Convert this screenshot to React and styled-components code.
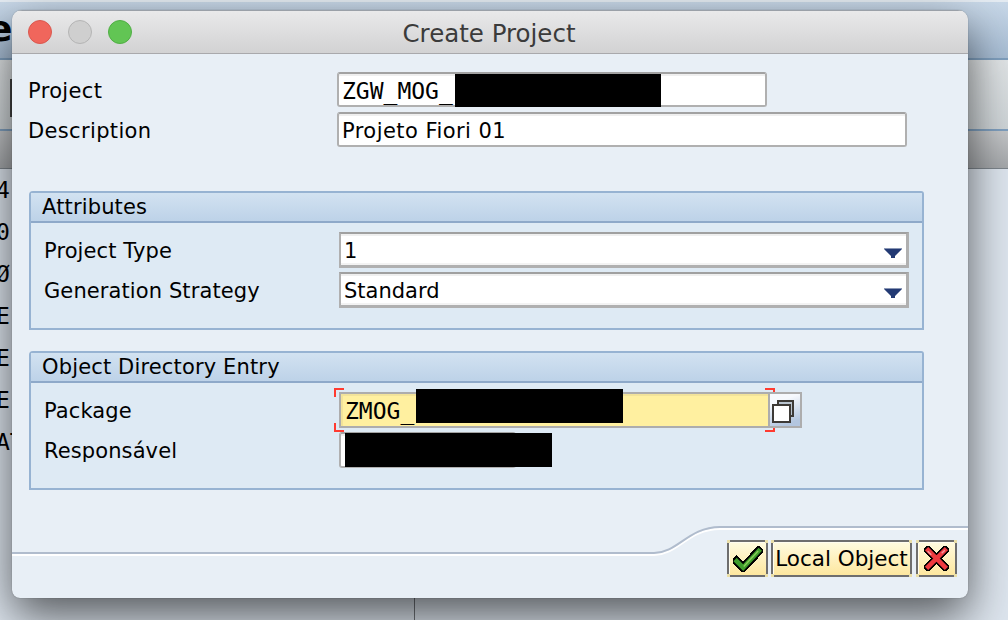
import styled, { createGlobalStyle } from "styled-components";

const GlobalStyle = createGlobalStyle`
  html, body {
    margin: 0;
    padding: 0;
    width: 1008px;
    height: 620px;
    overflow: hidden;
    background: #dfe6ee;
  }
  * {
    box-sizing: border-box;
  }
`;

const backRows = ["4", "0", "Ø", "E", "E", "E", "AT"];

function CheckIcon() {
  return (
    <svg width="30" height="26" viewBox="0 0 28 24">
      <path d="M3.5 14 L9.5 20 L24 4.5" fill="none" stroke="#000" strokeWidth="8" strokeLinecap="square" shapeRendering="crispEdges" />
      <path d="M3.5 14 L9.5 20 L24 4.5" fill="none" stroke="#3f9c2c" strokeWidth="4.4" strokeLinecap="square" />
      <path d="M10 19 L23.5 4.5" fill="none" stroke="#8ccf5a" strokeWidth="1.2" />
    </svg>
  );
}

function CancelIcon() {
  return (
    <svg width="25" height="25" viewBox="0 0 24 24">
      <path d="M4 4 L20 20 M20 4 L4 20" fill="none" stroke="#000" strokeWidth="7.6" strokeLinecap="square" shapeRendering="crispEdges" />
      <path d="M4 4 L20 20 M20 4 L4 20" fill="none" stroke="#ee3a40" strokeWidth="4.4" strokeLinecap="square" />
      <path d="M3.5 5 L7 8.5 M20 4 L17 7" fill="none" stroke="#f59aa0" strokeWidth="1.4" />
    </svg>
  );
}

function CopyIcon() {
  return (
    <svg width="24" height="24" viewBox="0 0 24 24">
      <rect x="7" y="1" width="15" height="15" fill="#b9c4cf" stroke="#3d3a36" strokeWidth="2" />
      <rect x="2" y="5" width="17" height="17" fill="#fff" stroke="#3d3a36" strokeWidth="2" />
    </svg>
  );
}

function DropArrow() {
  return (
    <svg width="18" height="11" viewBox="0 0 18 11">
      <rect x="0" y="0" width="18" height="1" fill="#8a97b5" />
      <polygon points="0,1 18,1 11,8 11,10 7,10 7,8" fill="#233a74" />
    </svg>
  );
}

function FooterCurve() {
  return (
    <Curve viewBox="0 0 956 32" width="956" height="32">
      <path d="M0 30 H642 C666 30 676 4 708 4 H956" fill="none" stroke="#fff" strokeWidth="2" />
      <path d="M0 28 H642 C666 28 676 2 708 2 H956" fill="none" stroke="#b0bccd" strokeWidth="2" />
    </Curve>
  );
}

export default function App() {
  return (
    <>
      <GlobalStyle />
      <Page>
        <BackHeader>
          <BackTitle>e</BackTitle>
        </BackHeader>
        <BackToolbar>
          <BackMark />
        </BackToolbar>
        <BackColumns />
        <BackList>
          {backRows.map((text, i) => (
            <BackRow key={i}>{text}</BackRow>
          ))}
        </BackList>
        <BackDivider />

        <Dialog>
          <TitleBar>
            <Lights>
              <Light $color="#f0665c" $edge="#d9584f" />
              <Light $color="#cfcfcf" $edge="#b4b4b4" />
              <Light $color="#62c554" $edge="#50ae45" />
            </Lights>
            <Title>Create Project</Title>
          </TitleBar>

          <Content>
            <TopFields>
              <TopLabel>Project</TopLabel>
              <Input $width={430} $mono>
                ZGW_MOG_
                <Redaction $left={116} $top={0} $width={206} $height={33} />
              </Input>
              <TopLabel>Description</TopLabel>
              <Input $width={570}>Projeto Fiori 01</Input>
            </TopFields>

            <Group $top={44}>
              <GroupHeader>Attributes</GroupHeader>
              <GroupFields>
                <Label>Project Type</Label>
                <Select>
                  1
                  <DropArrow />
                </Select>
                <Label>Generation Strategy</Label>
                <Select>
                  Standard
                  <DropArrow />
                </Select>
              </GroupFields>
            </Group>

            <Group $top={21}>
              <GroupHeader>Object Directory Entry</GroupHeader>
              <GroupFields>
                <Label>Package</Label>
                <PackageRow>
                  <RequiredInput>
                    ZMOG_
                    <Redaction $left={75} $top={-5} $width={207} $height={34} />
                    <Marker $side="left" $edge="top" />
                    <Marker $side="left" $edge="bottom" />
                    <Marker $side="right" $edge="top" />
                    <Marker $side="right" $edge="bottom" />
                  </RequiredInput>
                  <HelpButton>
                    <CopyIcon />
                  </HelpButton>
                </PackageRow>
                <Label>Responsável</Label>
                <Input $width={177} $tall>
                  <Redaction $left={4} $top={-1} $width={207} $height={34} />
                </Input>
              </GroupFields>
            </Group>
          </Content>

          <Footer>
            <FooterCurve />
            <ActionButton $width={41}>
              <CheckIcon />
            </ActionButton>
            <ActionButton $width={141} $gap={3}>
              Local Object
            </ActionButton>
            <ActionButton $width={41} $gap={4}>
              <CancelIcon />
            </ActionButton>
          </Footer>
        </Dialog>
      </Page>
    </>
  );
}

const Page = styled.div`
  position: relative;
  width: 1008px;
  height: 620px;
  overflow: hidden;
  display: flex;
  flex-direction: column;
  font-family: "DejaVu Sans", sans-serif;
  color: #000;
`;

const BackHeader = styled.div`
  height: 60px;
  padding-top: 2px;
  border-top: 2px solid #e4ebf2;
  border-bottom: 2px solid #7f9fbe;
  background: linear-gradient(#c8d8e8, #a6bcd3);
  overflow: hidden;
`;

const BackTitle = styled.div`
  margin-left: -12px;
  font-size: 36px;
  font-weight: bold;
  line-height: 50px;
`;

const BackToolbar = styled.div`
  height: 69px;
  display: flex;
  align-items: center;
  background: linear-gradient(#e0e4e6, #cdd3d6);
`;

const BackMark = styled.div`
  width: 12px;
  height: 38px;
  margin-top: 6px;
  border-right: 2px solid #444;
`;

const BackColumns = styled.div`
  height: 41px;
  border-top: 2px solid #7f9fbe;
  border-bottom: 2px solid #7d858c;
  background: linear-gradient(#c4c6c8, #a4a7aa);
`;

const BackList = styled.div`
  flex: 1;
  margin-top: -1px;
  background: #dde5ee;
`;

const BackRow = styled.div`
  height: 42px;
  margin-left: -4px;
  font-family: "DejaVu Sans Mono", monospace;
  font-size: 23px;
  line-height: 42px;
`;

const BackDivider = styled.div`
  position: absolute;
  left: 414px;
  top: 590px;
  width: 1px;
  height: 30px;
  background: #70747a;
`;

const Dialog = styled.div`
  position: absolute;
  left: 12px;
  top: 10px;
  width: 956px;
  height: 588px;
  display: flex;
  flex-direction: column;
  border-radius: 10px 10px 8px 8px;
  background: #e8eff6;
  box-shadow: 0 18px 46px rgba(0, 0, 0, 0.62), 0 0 1px rgba(0, 0, 0, 0.5);
  overflow: hidden;
`;

const TitleBar = styled.div`
  position: relative;
  height: 44px;
  flex: none;
  display: flex;
  align-items: center;
  justify-content: center;
  padding-top: 2px;
  background: linear-gradient(#e9e9ea, #d2d2d3);
  border-top: 1px solid #9aa0a8;
  border-bottom: 1px solid #a9a9ac;
`;

const Lights = styled.div`
  position: absolute;
  left: 16px;
  top: 9px;
  display: flex;
  gap: 16px;
`;

const Light = styled.span`
  width: 24px;
  height: 24px;
  border-radius: 50%;
  background: ${(p) => p.$color};
  border: 1px solid ${(p) => p.$edge};
`;

const Title = styled.div`
  font-size: 24.5px;
  color: #3b3b3b;
  margin-left: -2px;
`;

const Content = styled.div`
  flex: 1;
  padding: 18px 0 0 17px;
`;

const TopFields = styled.div`
  display: grid;
  grid-template-columns: 308px 1fr;
  grid-auto-rows: 35px;
  row-gap: 5px;
  align-items: center;
`;

const Label = styled.div`
  margin-left: -1px;
  padding-top: 2px;
  font-size: 21px;
  letter-spacing: 0.1px;
  line-height: 36px;
  white-space: nowrap;
`;

const TopLabel = styled(Label)`
  letter-spacing: 0.35px;
`;

const Input = styled.div`
  position: relative;
  width: ${(p) => p.$width}px;
  height: ${(p) => (p.$tall ? 36 : 35)}px;
  padding: 2px 0 0 3px;
  display: flex;
  align-items: center;
  border: 2px solid #b0b0b0;
  border-top-color: #a2a2a2;
  border-radius: 3px;
  background: #fff;
  box-shadow: inset 0 2px 0 #efefef;
  font-family: ${(p) => (p.$mono ? '"DejaVu Sans Mono", monospace' : "inherit")};
  font-size: ${(p) => (p.$mono ? 23 : 21)}px;
  letter-spacing: ${(p) => (p.$mono ? 0 : 0.45)}px;
  white-space: nowrap;
`;

const Redaction = styled.div`
  position: absolute;
  left: ${(p) => p.$left}px;
  top: ${(p) => p.$top}px;
  width: ${(p) => p.$width}px;
  height: ${(p) => p.$height}px;
  background: #000;
`;

const Group = styled.section`
  width: 895px;
  height: 139px;
  margin-top: ${(p) => p.$top}px;
  border: 2px solid #97b3d2;
  border-radius: 4px 3px 0 0;
  background: #deeaf4;
`;

const GroupHeader = styled.div`
  height: 30px;
  padding-left: 11px;
  display: flex;
  align-items: center;
  border-bottom: 2px solid #8ea9c9;
  background: linear-gradient(#d2e2f1, #bdd2e8);
  font-size: 21px;
  letter-spacing: 0.15px;
`;

const GroupFields = styled.div`
  padding: 9px 0 0 14px;
  display: grid;
  grid-template-columns: 294px 1fr;
  grid-auto-rows: 36px;
  row-gap: 4px;
  align-items: center;
`;

const Select = styled.div`
  width: 570px;
  height: 36px;
  padding: 2px 4px 0 3px;
  display: flex;
  align-items: center;
  justify-content: space-between;
  border: 2px solid #b0b0b0;
  border-top-color: #a0a0a0;
  border-bottom-width: 3px;
  border-right-width: 3px;
  background: #fff;
  box-shadow: inset 0 2px 0 #efefef, inset 0 -2px 0 #f3f3f3;
  font-size: 21px;

  svg {
    margin-top: 6px;
  }
`;

const PackageRow = styled.div`
  display: flex;
  height: 36px;
`;

const RequiredInput = styled.div`
  position: relative;
  width: 431px;
  padding: 2px 0 0 4px;
  display: flex;
  align-items: center;
  border: 2px solid #adadad;
  background: #fff0a0;
  box-shadow: inset 2px 2px 0 #f2e39a;
  font-family: "DejaVu Sans Mono", monospace;
  font-size: 23px;
`;

const Marker = styled.span`
  position: absolute;
  width: 10px;
  height: 9px;
  ${(p) => p.$side}: -7px;
  ${(p) => p.$edge}: -6px;
  border-style: solid;
  border-color: #ff3b30;
  border-width: 0;
  border-${(p) => p.$side}-width: 2px;
  border-${(p) => p.$edge}-width: 2px;
`;

const HelpButton = styled.div`
  position: relative;
  width: 32px;
  height: 36px;
  padding: 6px 0 0 1px;
  border: 2px solid #adadad;
  border-left: 0;
  background: linear-gradient(160deg, #f6f9fd 25%, #b3c6df 85%);
`;

const Footer = styled.div`
  position: relative;
  height: 73px;
  flex: none;
  padding: 15px 11px 0 0;
  display: flex;
  justify-content: flex-end;
`;

const Curve = styled.svg`
  position: absolute;
  left: 0;
  top: 0;
`;

const ActionButton = styled.div`
  position: relative;
  width: ${(p) => p.$width}px;
  height: 37px;
  margin-left: ${(p) => p.$gap || 0}px;
  display: flex;
  align-items: center;
  justify-content: center;
  border: 2px solid #6e6e6e;
  background: linear-gradient(#fffbe0, #fde79f);
  box-shadow: inset 1px 1px 0 #fffdf0;
  font-size: 21.5px;
  white-space: nowrap;

  &::before {
    content: "";
    position: absolute;
    inset: -2px;
    background:
      linear-gradient(#eadfa8, #eadfa8) 0 0 / 3px 3px no-repeat,
      linear-gradient(#eadfa8, #eadfa8) 100% 0 / 3px 3px no-repeat,
      linear-gradient(#eadfa8, #eadfa8) 0 100% / 3px 3px no-repeat,
      linear-gradient(#eadfa8, #eadfa8) 100% 100% / 3px 3px no-repeat;
  }
`;
